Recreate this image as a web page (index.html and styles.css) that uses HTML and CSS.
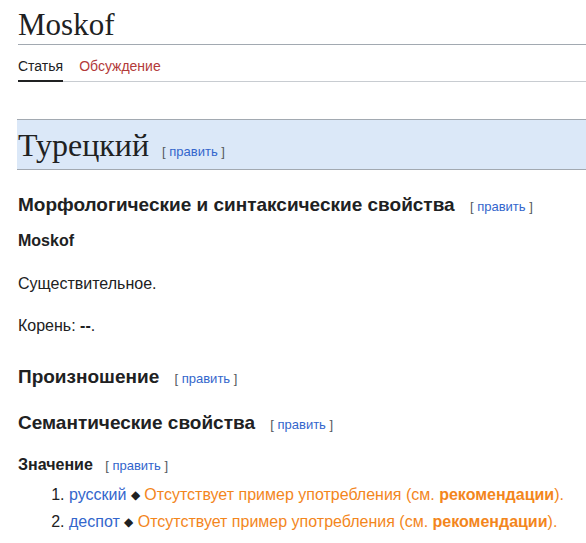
FILE: index.html
```html
<!DOCTYPE html>
<html lang="ru">
<head>
    <meta charset="UTF-8">
    <title>Moskof</title>
    <link rel="stylesheet" href="styles.css">
</head>
<body>
    <div class="page">
        <h1 class="title">Moskof</h1>
        <div class="tabs">
            <a class="tab selected">Статья</a>
            <a class="tab talk">Обсуждение</a>
        </div>

        <h1 class="lang">Турецкий <span class="edit">[ <a>править</a> ]</span></h1>

        <h3 class="section">Морфологические и синтаксические свойства <span class="edit">[ <a>править</a> ]</span></h3>
        <p class="word"><b>Moskof</b></p>
        <p>Существительное.</p>
        <p>Корень: <b>--</b>.</p>

        <h3 class="section pron">Произношение <span class="edit">[ <a>править</a> ]</span></h3>
        <h3 class="section sem">Семантические свойства <span class="edit">[ <a>править</a> ]</span></h3>
        <h4 class="sub">Значение <span class="edit">[ <a>править</a> ]</span></h4>
        <ol class="meanings">
            <li><a class="link">русский</a> <span class="dia">◆</span> <span class="missing">Отсутствует пример употребления (см. <b>рекомендации</b>).</span></li>
            <li><a class="link">деспот</a> <span class="dia">◆</span> <span class="missing">Отсутствует пример употребления (см. <b>рекомендации</b>).</span></li>
        </ol>
    </div>
</body>
</html>
```

FILE: styles.css
```css
* {
    margin: 0;
    padding: 0;
    box-sizing: border-box;
}

body {
    font-family: "Liberation Sans", Arial, sans-serif;
    color: #202122;
    background: #fff;
    font-size: 16px;
}

.page {
    padding: 0 0 0 18px;
}

.title {
    font-family: "Liberation Serif", "Times New Roman", serif;
    font-weight: normal;
    font-size: 31px;
    line-height: 36px;
    padding-top: 7px;
    border-bottom: 1px solid #a2a9b1;
    padding-bottom: 1px;
}

.tabs {
    display: flex;
    gap: 16px;
    border-bottom: 1px solid #c8ccd1;
    height: 37px;
    align-items: flex-end;
}

.tab {
    font-size: 14px;
    padding-bottom: 6px;
    border-bottom: 2px solid transparent;
    margin-bottom: -1px;
}

.tab.selected {
    border-bottom-color: #202122;
}

.talk {
    color: #b33a3a;
}

.lang {
    font-family: "Liberation Serif", "Times New Roman", serif;
    font-weight: normal;
    font-size: 32px;
    line-height: 36px;
    background: #dbe8f8;
    border-top: 1px solid #a2a9b1;
    border-bottom: 1px solid #a2a9b1;
    margin: 37px 0 0 -1px;
    padding: 7px 0 6px 1px;
}

.edit {
    font-family: "Liberation Sans", Arial, sans-serif;
    font-size: 13px;
    font-weight: normal;
    line-height: 1;
    color: #54595d;
    margin-left: 10px;
}

.lang .edit {
    margin-left: 5px;
}

.edit a {
    color: #3366cc;
}

.section {
    font-size: 19px;
    font-weight: bold;
    line-height: 24px;
    margin-top: 23px;
}

.section.pron {
    margin-top: 28px;
}

.section.sem {
    margin-top: 22px;
}

p {
    line-height: 22px;
    margin-top: 20px;
}

p.word {
    margin-top: 13px;
}

p + p {
    margin-top: 20.5px;
}

.sub {
    font-size: 16px;
    font-weight: bold;
    line-height: 22px;
    margin-top: 19px;
}

.sub .edit {
    margin-left: 8px;
}

.meanings {
    margin: 5px 0 0 51px;
    line-height: 27px;
}

.link {
    color: #3366cc;
}

.dia {
    font-size: 12px;
    line-height: 1;
    vertical-align: 1px;
}

.missing {
    color: #f3861c;
}
```
